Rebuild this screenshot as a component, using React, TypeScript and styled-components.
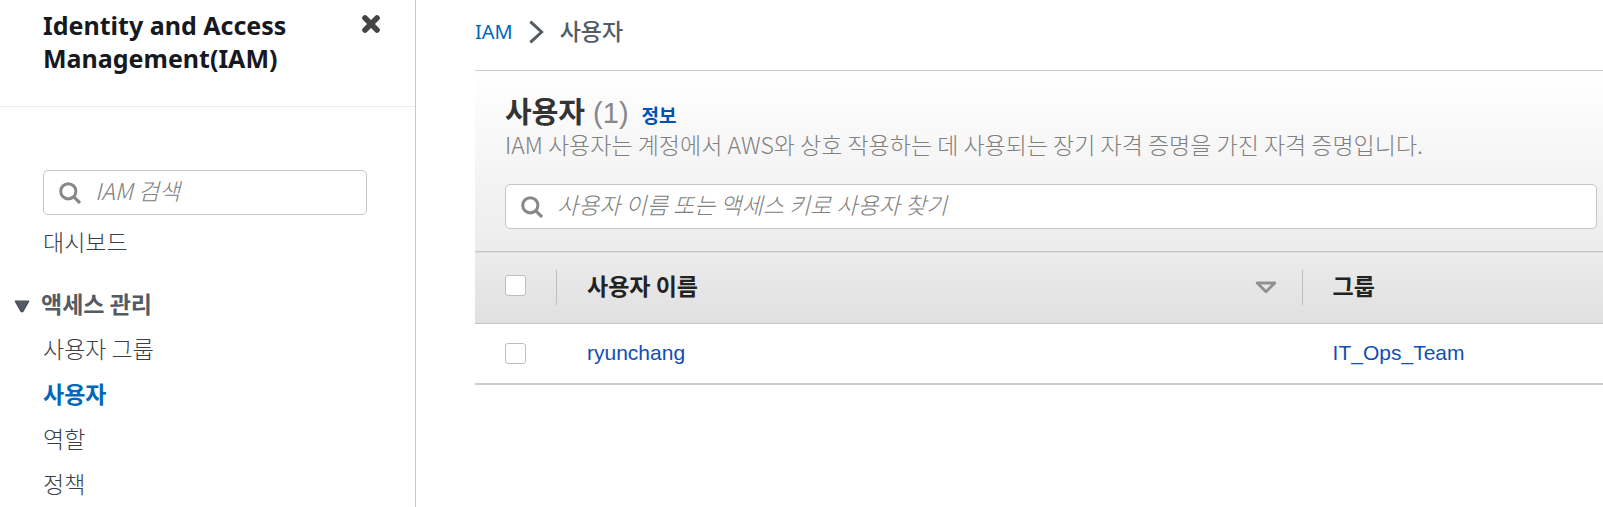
import React from "react";
import styled, { createGlobalStyle } from "styled-components";

const GlobalStyle = createGlobalStyle`
  *, *::before, *::after { box-sizing: border-box; }
  body {
    margin: 0;
    background: #ffffff;
    font-family: "Liberation Sans", "Noto Sans CJK KR", sans-serif;
    font-size: 21px;
    line-height: 28px;
    color: #545b64;
  }
  a { color: inherit; text-decoration: none; }
  h1, h2, h3, p, ul, ol { margin: 0; padding: 0; }
  ul, ol { list-style: none; }
`;

const brandFont = `"Noto Sans", "Noto Sans CJK KR", sans-serif`;
const koreanFont = `"Noto Sans CJK KR", sans-serif`;

const Page = styled.div`
  display: flex;
  min-height: 100vh;
`;

const Sidebar = styled.aside`
  flex: 0 0 416px;
  border-right: 1px solid #c3c8c8;
`;

const SidebarHeader = styled.header`
  display: flex;
  justify-content: space-between;
  align-items: flex-start;
  padding: 9px 35px 31px 43px;
  border-bottom: 1px solid #eaeded;
`;

const ServiceTitle = styled.h2`
  font-family: ${brandFont};
  font-size: 25px;
  font-weight: 700;
  line-height: 33px;
  color: #16191f;
`;

const CloseButton = styled.button`
  display: flex;
  margin: 6px 0 0;
  padding: 0;
  border: 0;
  background: none;
`;

const SidebarBody = styled.div`
  padding: 63px 48px 0 43px;
`;

const SearchBox = styled.label`
  display: flex;
  align-items: center;
  gap: 14px;
  height: 45px;
  padding: 0 15px;
  border: 1px solid #c6c6c6;
  border-radius: 5px;
  background: #ffffff;
`;

const SearchInput = styled.input`
  flex: 1;
  min-width: 0;
  padding: 0 0 6px;
  border: 0;
  outline: 0;
  background: none;
  font-family: ${koreanFont};
  font-size: 23px;
  font-weight: 300;
  color: #444444;

  &::placeholder {
    color: #808080;
    font-style: italic;
    opacity: 1;
  }
`;

const Nav = styled.nav`
  padding-top: 4px;
`;

const NavLink = styled.a<{ $active?: boolean }>`
  display: block;
  font-family: ${koreanFont};
  font-size: 23px;
  font-weight: ${(p) => (p.$active ? 700 : 300)};
  line-height: 45px;
  color: ${(p) => (p.$active ? "#0067bd" : "#3a4049")};
`;

const NavSection = styled.section`
  padding-top: 17px;
`;

const SectionToggle = styled.button`
  display: flex;
  align-items: center;
  gap: 11px;
  margin-left: -29px;
  padding: 0;
  border: 0;
  background: none;
  font-family: ${koreanFont};
  font-size: 23px;
  font-weight: 700;
  line-height: 45px;
  color: #545b64;

  svg {
    margin-top: 5px;
  }
`;

const Main = styled.main`
  flex: 1;
  min-width: 0;
  padding-left: 59px;
`;

const Breadcrumbs = styled.ol`
  display: flex;
  align-items: center;
  height: 70px;
  padding-bottom: 7px;
  gap: 16px;
  font-family: ${brandFont};
`;

const Crumb = styled.li<{ $current?: boolean }>`
  display: flex;
  padding-bottom: ${(p) => (p.$current ? "2px" : "0")};
  font-size: ${(p) => (p.$current ? "23px" : "20px")};
  font-weight: ${(p) => (p.$current ? 500 : 400)};
  color: ${(p) => (p.$current ? "#545b64" : "#0067bd")};
`;

const Separator = styled.li`
  display: flex;
`;

const Panel = styled.section`
  border-top: 1px solid #cccccc;
`;

const PanelHeader = styled.header`
  padding: 25px 6px 22px 30px;
  background: linear-gradient(#ffffff, #ececec);
`;

const TitleRow = styled.div`
  display: flex;
  align-items: baseline;
  height: 35px;
  gap: 13px;
`;

const PanelTitle = styled.h1`
  font-family: "Liberation Sans", ${koreanFont};
  font-size: 29px;
  font-weight: 700;
  line-height: 35px;
  color: #333333;
`;

const Count = styled.span`
  font-weight: 400;
  color: #888888;
`;

const InfoLink = styled.a`
  font-family: ${koreanFont};
  font-size: 19px;
  font-weight: 700;
  color: #0050b8;
`;

const Description = styled.p`
  margin-bottom: 27px;
  font-family: ${koreanFont};
  font-size: 23px;
  font-weight: 300;
  line-height: 26px;
  color: #808080;
`;

const UserTable = styled.table`
  width: 100%;
  table-layout: fixed;
  border-collapse: collapse;
`;

const SelectColumn = styled.col`
  width: 82px;
`;

const NameColumn = styled.col`
  width: 66.1%;
`;

const HeadRow = styled.tr`
  height: 72px;
  background: linear-gradient(#ececec, #e0e0e0);
  border-top: 1px solid #c4c4c4;
  border-bottom: 1px solid #c4c4c4;
`;

const HeadCell = styled.th`
  padding: 0;
  font-family: ${koreanFont};
  font-size: 23px;
  font-weight: 700;
  text-align: left;
  color: #222222;
`;

const HeadContent = styled.div<{ $divider?: boolean }>`
  display: flex;
  align-items: center;
  justify-content: space-between;
  height: 35px;
  padding: 0 25px 0 30px;
  border-right: ${(p) => (p.$divider ? "1px solid #bfbfbf" : "0")};

  input {
    margin-bottom: 4px;
  }
`;

const HeadLabel = styled.span`
  padding-bottom: 6px;
`;

const BodyRow = styled.tr`
  height: 60px;
  border-bottom: 2px solid #cccccc;
`;

const BodyCell = styled.td`
  padding: 0 29px 0 30px;
  color: #0f4fb5;
`;

const Checkbox = styled.input`
  appearance: none;
  display: block;
  flex: none;
  width: 21px;
  height: 21px;
  margin: 0;
  border: 1px solid #bfbfbf;
  border-radius: 3px;
  background: #ffffff;
`;

const SortButton = styled.button`
  display: flex;
  padding: 0;
  border: 0;
  background: none;
`;

const SearchIcon = () => (
  <svg width="22" height="22" viewBox="0 0 22 22" fill="none" stroke="#888888" aria-hidden="true">
    <circle cx="9.3" cy="9.3" r="7.6" strokeWidth="3" />
    <path d="M14.6 14.6 21 21" strokeWidth="3.2" />
  </svg>
);

const CloseIcon = () => (
  <svg width="18" height="18" viewBox="0 0 18 18" fill="none" aria-hidden="true">
    <path d="M3 3 15 15M15 3 3 15" stroke="#444444" strokeWidth="5.6" strokeLinecap="round" />
  </svg>
);

const CaretIcon = () => (
  <svg width="16" height="13" viewBox="0 0 16 13" aria-hidden="true">
    <path d="M1.3 1.2H14.7L8.8 11.6H7.2Z" fill="#545b64" stroke="#424a54" strokeWidth="1.2" strokeLinejoin="round" />
  </svg>
);

const ChevronIcon = () => (
  <svg width="15" height="24" viewBox="0 0 15 24" fill="none" aria-hidden="true">
    <path d="M1.4 1.6 12.6 12 1.4 22.4" stroke="#545b64" strokeWidth="3" />
  </svg>
);

const SortIcon = () => (
  <svg width="22" height="13" viewBox="0 0 22 13" fill="none" aria-hidden="true">
    <path d="M2.2 2H19.8L11 10.8Z" stroke="#909090" strokeWidth="2.8" strokeLinejoin="round" />
  </svg>
);

const navItems = [
  { label: "사용자 그룹" },
  { label: "사용자", active: true },
  { label: "역할" },
  { label: "정책" },
];

const users = [{ name: "ryunchang", group: "IT_Ops_Team" }];

export default function App() {
  return (
    <>
      <GlobalStyle />
      <Page>
        <Sidebar>
          <SidebarHeader>
            <ServiceTitle>
              Identity and Access
              <br />
              Management(IAM)
            </ServiceTitle>
            <CloseButton type="button" aria-label="닫기">
              <CloseIcon />
            </CloseButton>
          </SidebarHeader>
          <SidebarBody>
            <SearchBox>
              <SearchIcon />
              <SearchInput type="text" placeholder="IAM 검색" aria-label="IAM 검색" />
            </SearchBox>
            <Nav>
              <NavLink href="#dashboard">대시보드</NavLink>
              <NavSection>
                <SectionToggle type="button" aria-expanded="true">
                  <CaretIcon />
                  액세스 관리
                </SectionToggle>
                <ul>
                  {navItems.map((item) => (
                    <li key={item.label}>
                      <NavLink href="#" $active={item.active}>
                        {item.label}
                      </NavLink>
                    </li>
                  ))}
                </ul>
              </NavSection>
            </Nav>
          </SidebarBody>
        </Sidebar>
        <Main>
          <Breadcrumbs>
            <Crumb>
              <a href="#iam">IAM</a>
            </Crumb>
            <Separator aria-hidden="true">
              <ChevronIcon />
            </Separator>
            <Crumb $current>사용자</Crumb>
          </Breadcrumbs>
          <Panel>
            <PanelHeader>
              <TitleRow>
                <PanelTitle>
                  사용자 <Count>(1)</Count>
                </PanelTitle>
                <InfoLink href="#info">정보</InfoLink>
              </TitleRow>
              <Description>
                IAM 사용자는 계정에서 AWS와 상호 작용하는 데 사용되는 장기 자격 증명을 가진 자격 증명입니다.
              </Description>
              <SearchBox>
                <SearchIcon />
                <SearchInput
                  type="text"
                  placeholder="사용자 이름 또는 액세스 키로 사용자 찾기"
                  aria-label="사용자 찾기"
                />
              </SearchBox>
            </PanelHeader>
            <UserTable>
              <colgroup>
                <SelectColumn />
                <NameColumn />
                <col />
              </colgroup>
              <thead>
                <HeadRow>
                  <HeadCell>
                    <HeadContent $divider>
                      <Checkbox type="checkbox" aria-label="모두 선택" />
                    </HeadContent>
                  </HeadCell>
                  <HeadCell>
                    <HeadContent $divider>
                      <HeadLabel>사용자 이름</HeadLabel>
                      <SortButton type="button" aria-label="정렬">
                        <SortIcon />
                      </SortButton>
                    </HeadContent>
                  </HeadCell>
                  <HeadCell>
                    <HeadContent>
                      <HeadLabel>그룹</HeadLabel>
                    </HeadContent>
                  </HeadCell>
                </HeadRow>
              </thead>
              <tbody>
                {users.map((user) => (
                  <BodyRow key={user.name}>
                    <BodyCell>
                      <Checkbox type="checkbox" aria-label={user.name} />
                    </BodyCell>
                    <BodyCell>
                      <a href="#user">{user.name}</a>
                    </BodyCell>
                    <BodyCell>
                      <a href="#group">{user.group}</a>
                    </BodyCell>
                  </BodyRow>
                ))}
              </tbody>
            </UserTable>
          </Panel>
        </Main>
      </Page>
    </>
  );
}
